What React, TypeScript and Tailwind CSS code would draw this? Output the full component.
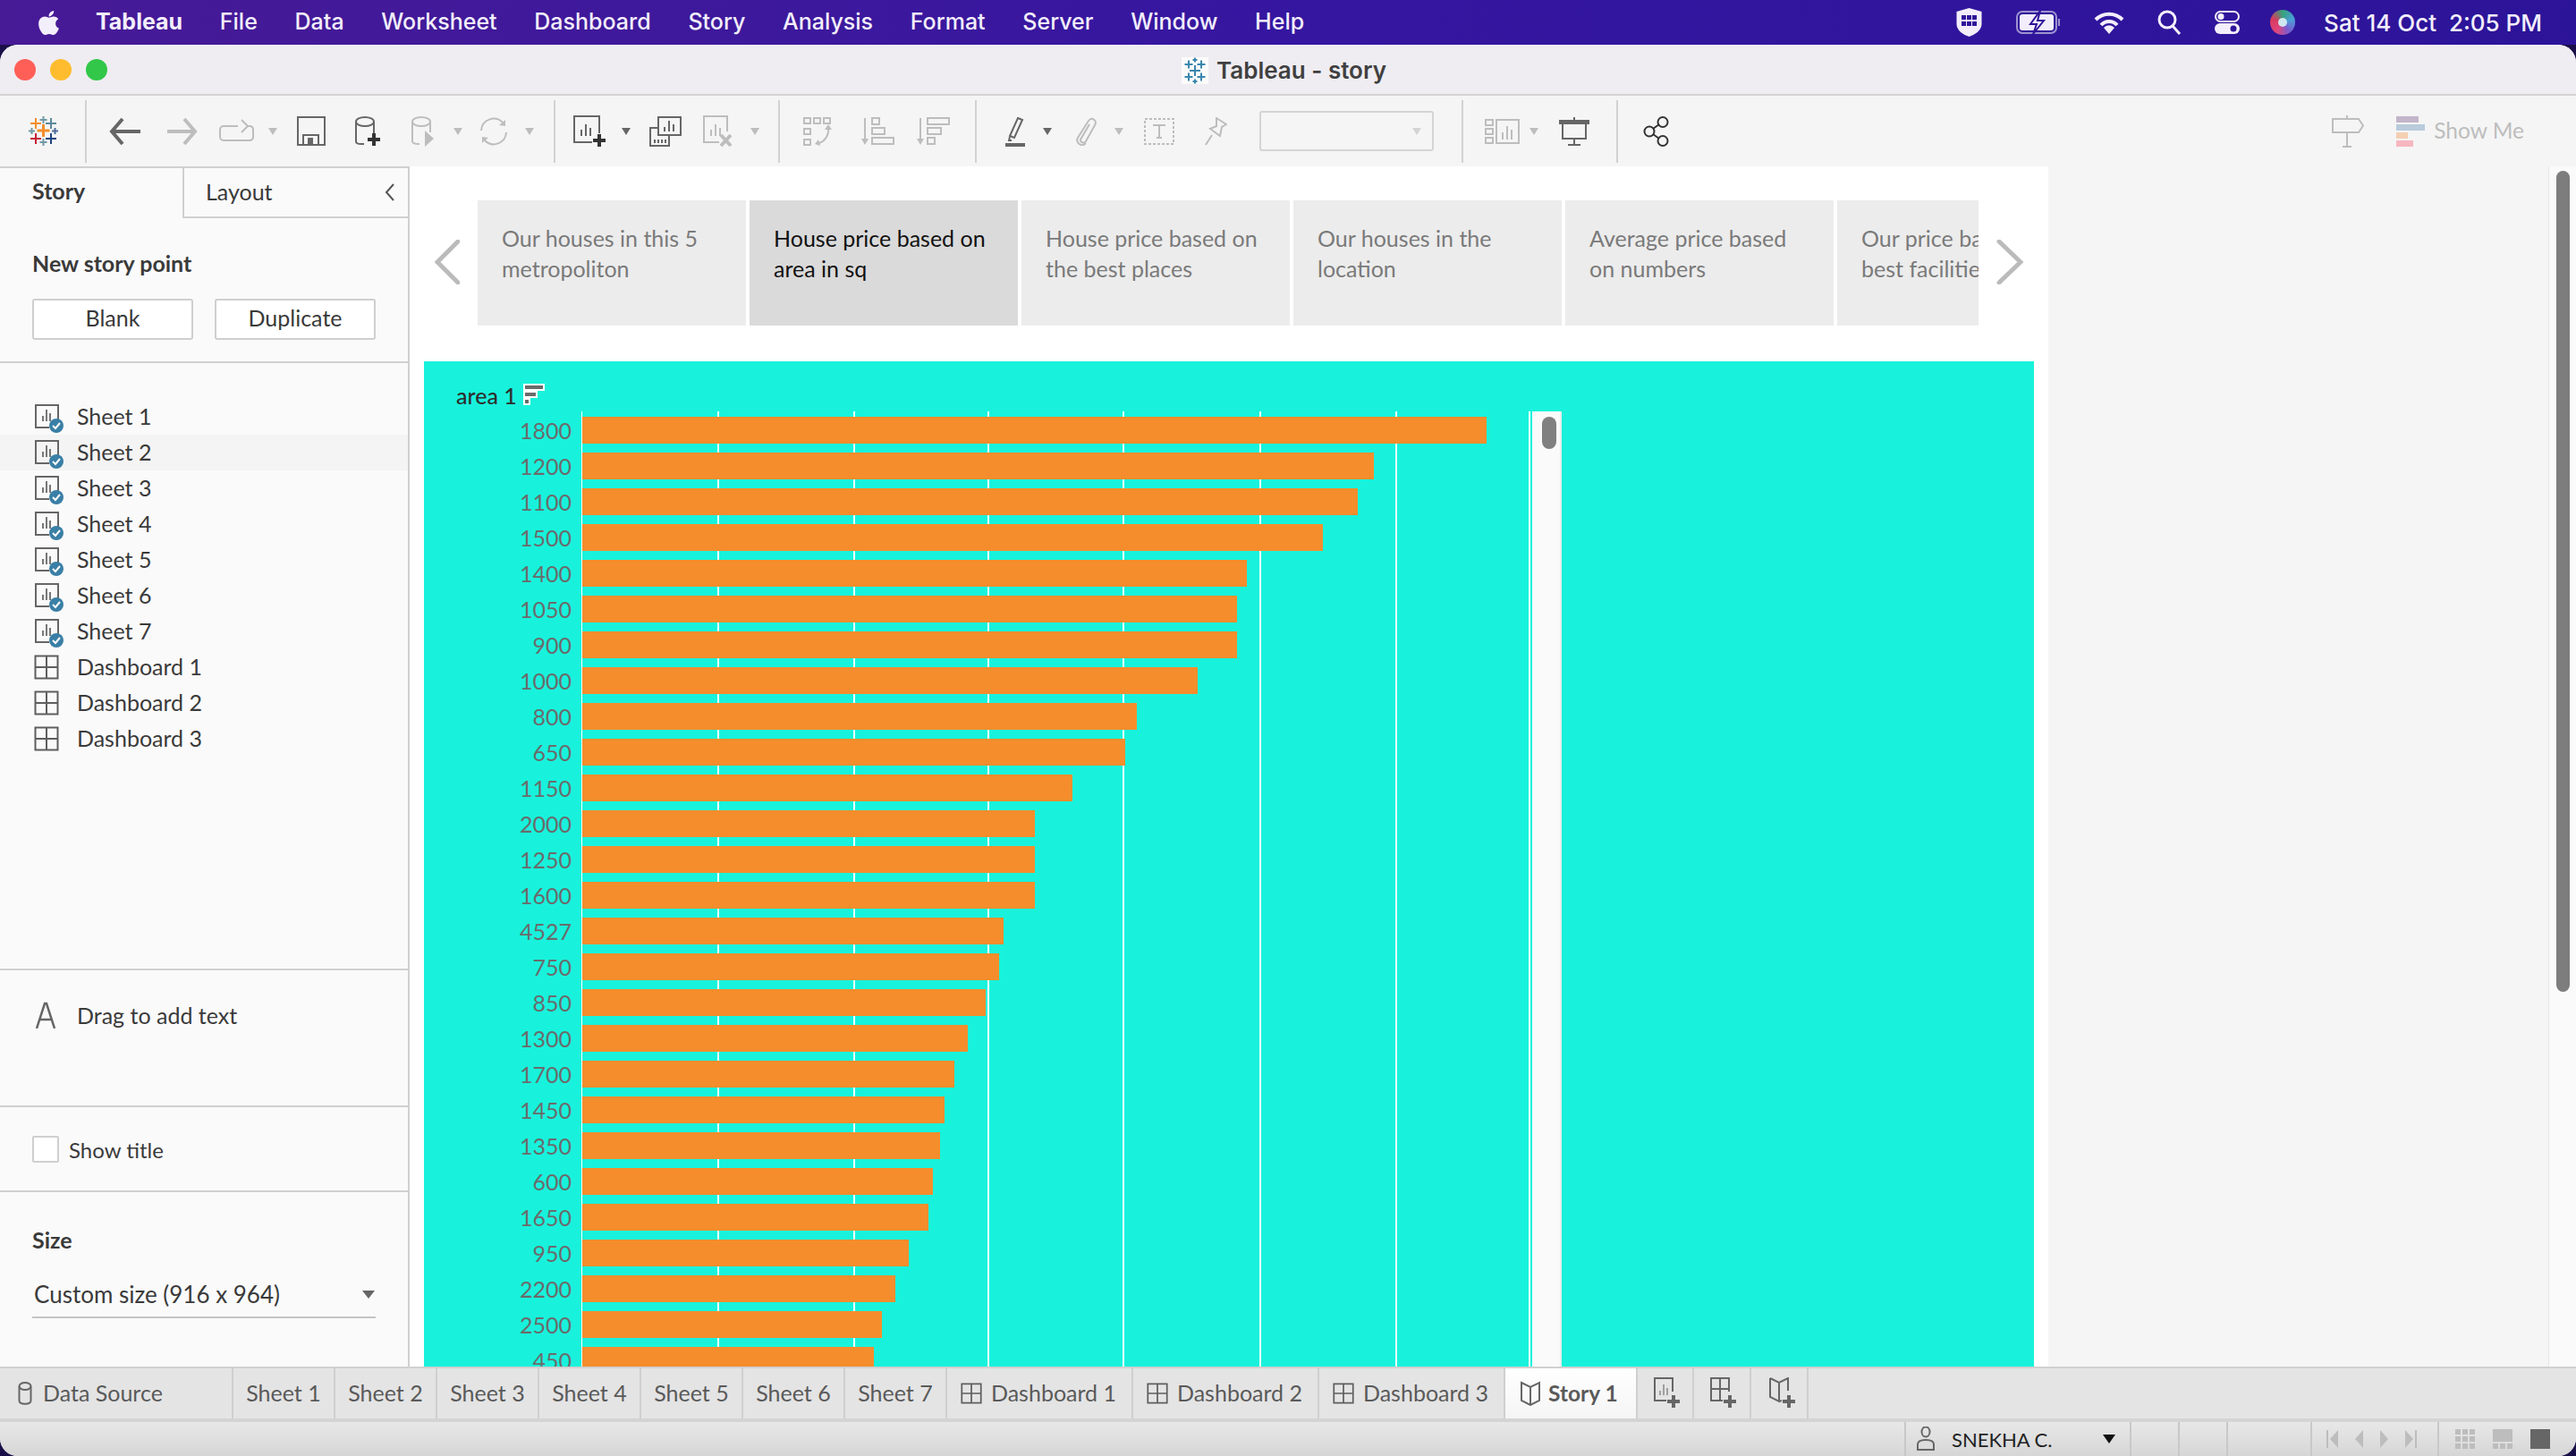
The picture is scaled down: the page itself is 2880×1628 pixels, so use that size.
import React from 'react';
import { FaApple } from 'react-icons/fa';

const DARK = '#666666';
const FADE = '#bdbdbd';

const bars: [string, number][] = [
  ['1800', 1662], ['1200', 1536], ['1100', 1518], ['1500', 1479], ['1400', 1394], ['1050', 1383], ['900', 1383],
  ['1000', 1339], ['800', 1271], ['650', 1258], ['1150', 1199], ['2000', 1157], ['1250', 1157], ['1600', 1157],
  ['4527', 1122], ['750', 1117], ['850', 1102], ['1300', 1082], ['1700', 1067], ['1450', 1056], ['1350', 1051],
  ['600', 1043], ['1650', 1038], ['950', 1016], ['2200', 1001], ['2500', 986], ['450', 977],
];

const gridLines = [152, 304, 454, 605, 758, 910];

const Cross = ({ x, y, s, c, t = 2 }: { x: number; y: number; s: number; c: string; t?: number }) => (
  <g fill={c}>
    <rect x={x - s / 2} y={y - t / 2} width={s} height={t} />
    <rect x={x - t / 2} y={y - s / 2} width={t} height={s} />
  </g>
);

const TableauLogo = () => (
  <svg width="33" height="33" viewBox="0 0 33 33" className="ml-[32px] shrink-0">
    <Cross x={16.5} y={16} s={14} c="#f28e2b" t={3} />
    <Cross x={16.5} y={4} s={8} c="#7099a6" />
    <Cross x={8} y={8} s={12} c="#f28e2b" t={2} />
    <Cross x={25} y={8} s={12} c="#5b879b" t={2} />
    <Cross x={8} y={25} s={12} c="#c72035" t={2} />
    <Cross x={25} y={25} s={12} c="#1f447e" t={2} />
    <Cross x={3.5} y={16.5} s={7} c="#7099a6" />
    <Cross x={29.5} y={16.5} s={7} c="#4e6c99" />
    <Cross x={16.5} y={29} s={8} c="#7099a6" />
  </svg>
);

const Sep = ({ className }: { className: string }) => <div className={`w-[2px] h-[70px] bg-[#d2d2d2] shrink-0 ${className}`} />;

const Drop = ({ className, color = FADE }: { className: string; color?: string }) => (
  <svg width="10" height="8" viewBox="0 0 10 8" className={`shrink-0 ${className}`}>
    <path d="M0 0h10L5 8z" fill={color} />
  </svg>
);

const BarsInDoc = ({ c }: { c: string }) => (
  <path d="M9 23v-7M14 23V10M19 23v-9" stroke={c} strokeWidth="2" fill="none" />
);

const PlusMark = ({ x, y, c = '#333', s = 14 }: { x: number; y: number; c?: string; s?: number }) => (
  <path d={`M${x - s / 2} ${y}h${s}M${x} ${y - s / 2}v${s}`} stroke={c} strokeWidth="4" fill="none" />
);

const SheetIcon = () => (
  <svg width="34" height="34" viewBox="0 0 34 34" className="shrink-0 ml-[38px] mt-[4px]">
    <path d="M27 24V2H2v25h15" fill="none" stroke="#666" strokeWidth="2" />
    <path d="M10 20v-6M14 20V7M18 20V11" stroke="#777" strokeWidth="2" fill="none" />
    <circle cx="25" cy="25" r="8" fill="#3a7fa6" />
    <path d="M21 25l3 3 5-6" stroke="#fff" strokeWidth="2" fill="none" />
  </svg>
);

const DashIcon = ({ className = '', size = 28 }: { className?: string; size?: number }) => (
  <svg width={size} height={size} viewBox="0 0 28 28" className={`shrink-0 ${className}`}>
    <path d="M1.5 1.5h25v25h-25zM14 1.5v25M1.5 14h25" fill="none" stroke="#5e5e5e" strokeWidth="2" />
  </svg>
);

const Toolbar = () => (
  <div className="h-[79px] bg-[#f5f5f5] flex items-center shrink-0 pr-[58px]">
    <TableauLogo />
    <Sep className="ml-[30px]" />
    <svg width="36" height="32" viewBox="0 0 36 32" className="ml-[24px] shrink-0">
      <path d="M16 2L4 16l12 14M4 16h32" fill="none" stroke={DARK} strokeWidth="4" />
    </svg>
    <svg width="35" height="32" viewBox="0 0 35 32" className="ml-[30px] shrink-0">
      <path d="M19 2l12 14-12 14M0 16h31" fill="none" stroke={FADE} strokeWidth="4" />
    </svg>
    <svg width="41" height="28" viewBox="0 0 41 28" className="ml-[22px] shrink-0">
      <path d="M22 8H6a4 4 0 0 0-4 4v8a4 4 0 0 0 4 4h30a4 4 0 0 0 3-4v-8a4 4 0 0 0-3-4h-4" fill="none" stroke={FADE} strokeWidth="2" />
      <path d="M26 1l7 7-7 7" fill="none" stroke={FADE} strokeWidth="2" />
    </svg>
    <Drop className="ml-[15px]" />
    <svg width="32" height="33" viewBox="0 0 32 33" className="ml-[22px] shrink-0">
      <rect x="1" y="1" width="30" height="31" fill="none" stroke={DARK} strokeWidth="2" />
      <path d="M7 32V21h17v11" fill="none" stroke={DARK} strokeWidth="2" />
      <rect x="12" y="24" width="6" height="8" fill={DARK} />
    </svg>
    <svg width="30" height="34" viewBox="0 0 30 34" className="ml-[33px] shrink-0">
      <ellipse cx="11" cy="6" rx="10" ry="5" fill="none" stroke={DARK} strokeWidth="2" />
      <path d="M1 6v22c0 3 3 3 9 3M21 6v16" fill="none" stroke={DARK} strokeWidth="2" />
      <PlusMark x={21} y={26} />
    </svg>
    <svg width="26" height="34" viewBox="0 0 26 34" className="ml-[33px] shrink-0">
      <ellipse cx="11" cy="6" rx="10" ry="5" fill="none" stroke={FADE} strokeWidth="2" />
      <path d="M1 6v22c0 2 3 3 8 3M21 6v12" fill="none" stroke={FADE} strokeWidth="2" />
      <path d="M15 16l10 9-10 9z" fill={FADE} />
    </svg>
    <Drop className="ml-[21px]" />
    <svg width="36" height="34" viewBox="0 0 36 34" className="ml-[17px] shrink-0">
      <path d="M4 16a14 14 0 0 1 24-9M32 18a14 14 0 0 1-24 9" fill="none" stroke={FADE} strokeWidth="2" />
      <path d="M24 10l7 1 0-7zM12 24l-7-1 0 7z" fill={FADE} />
    </svg>
    <Drop className="ml-[17px]" />
    <Sep className="ml-[22px]" />
    <svg width="38" height="36" viewBox="0 0 38 36" className="ml-[20px] shrink-0">
      <path d="M29 20V1H1v29h20" fill="none" stroke={DARK} strokeWidth="2" />
      <BarsInDoc c={DARK} />
      <PlusMark x={29} y={28} />
    </svg>
    <Drop className="ml-[16px]" color="#666" />
    <svg width="36" height="34" viewBox="0 0 36 34" className="ml-[21px] shrink-0">
      <rect x="10" y="1" width="25" height="20" fill="#f5f5f5" stroke={DARK} strokeWidth="2" />
      <path d="M17 17v-5M22 17V5M27 17V9" stroke={DARK} strokeWidth="2" />
      <path d="M9 13H1v20h21v-12" fill="none" stroke={DARK} strokeWidth="2" />
      <path d="M6 26v4M10 26v4M14 26v4M18 26v4" stroke={DARK} strokeWidth="2" />
    </svg>
    <svg width="34" height="36" viewBox="0 0 34 36" className="ml-[24px] shrink-0">
      <path d="M27 18V1H1v29h17" fill="none" stroke={FADE} strokeWidth="2" />
      <BarsInDoc c={FADE} />
      <path d="M20 22l11 12M31 22L20 34" stroke={FADE} strokeWidth="4" />
    </svg>
    <Drop className="ml-[19px]" />
    <Sep className="ml-[21px]" />
    <svg width="34" height="32" viewBox="0 0 34 32" className="ml-[26px] shrink-0">
      <g fill="none" stroke={FADE} strokeWidth="2">
        <path d="M1 1h7v6H1zM12 1h7v6h-7zM23 1h7v6h-7zM1 13h7v6H1zM1 25h7v6H1z" />
        <path d="M28 12c1 8-4 15-10 17" />
      </g>
      <path d="M24 14l4-6 4 6zM17 25l-4 5 6 2z" fill={FADE} />
    </svg>
    <svg width="37" height="32" viewBox="0 0 37 32" className="ml-[31px] shrink-0">
      <g fill="none" stroke={FADE} strokeWidth="2">
        <path d="M4 1v26" />
        <path d="M12 1h8v7h-8zM12 12h14v7H12zM12 23h24v7H12z" />
      </g>
      <path d="M0 24h8l-4 7z" fill={FADE} />
    </svg>
    <svg width="37" height="32" viewBox="0 0 37 32" className="ml-[25px] shrink-0">
      <g fill="none" stroke={FADE} strokeWidth="2">
        <path d="M4 1v26" />
        <path d="M12 1h24v7H12zM12 12h15v7H12zM12 23h8v7h-8z" />
      </g>
      <path d="M0 24h8l-4 7z" fill={FADE} />
    </svg>
    <Sep className="ml-[28px]" />
    <svg width="22" height="34" viewBox="0 0 22 34" className="ml-[32px] shrink-0">
      <path d="M14 2l5 2-9 20-5-2z" fill="none" stroke={DARK} strokeWidth="2" />
      <path d="M5 23l-1 4 3 0" fill="none" stroke={DARK} strokeWidth="2" />
      <rect x="0" y="30" width="22" height="4" fill={DARK} />
    </svg>
    <Drop className="ml-[20px]" color="#666" />
    <svg width="27" height="32" viewBox="0 0 27 32" className="ml-[25px] shrink-0">
      <path d="M17 8L7 25c-1 3 4 5 6 2L23 9c3-5-3-10-7-5L4 23c-3 6 5 11 9 6" fill="none" stroke={FADE} strokeWidth="2" />
    </svg>
    <Drop className="ml-[18px]" />
    <svg width="34" height="30" viewBox="0 0 34 30" className="ml-[23px] shrink-0">
      <rect x="1" y="1" width="32" height="28" fill="none" stroke={FADE} strokeWidth="2" strokeDasharray="3 2" />
      <path d="M10 8h14M17 8v14M14 22h6" fill="none" stroke={FADE} strokeWidth="2" />
    </svg>
    <svg width="26" height="32" viewBox="0 0 26 32" className="ml-[33px] shrink-0">
      <path d="M14 1l11 7-5 3-2 10-11-8 7-3zM9 20l-7 11" fill="none" stroke={FADE} strokeWidth="2" />
    </svg>
    <div className="ml-[36px] w-[195px] h-[45px] border-2 border-[#d4d4d4] rounded-[3px] bg-[#f5f5f5] flex items-center justify-end pr-[12px] shrink-0">
      <Drop className="" color="#d4d4d4" />
    </div>
    <Sep className="ml-[31px]" />
    <svg width="40" height="28" viewBox="0 0 40 28" className="ml-[24px] shrink-0">
      <g fill="none" stroke={FADE} strokeWidth="2">
        <path d="M1 1h8v6H1zM1 11h8v6H1zM1 21h8v6H1zM13 1h25v26H13z" />
        <path d="M20 23v-8M25 23V8M30 23V12" />
      </g>
    </svg>
    <Drop className="ml-[10px]" />
    <svg width="34" height="32" viewBox="0 0 34 32" className="ml-[23px] shrink-0">
      <rect x="0" y="3" width="34" height="5" fill={DARK} />
      <path d="M4 8v16h26V8M17 0v3M17 24v7M10 31h14" fill="none" stroke={DARK} strokeWidth="2" />
    </svg>
    <Sep className="ml-[30px]" />
    <svg width="30" height="34" viewBox="0 0 30 34" className="ml-[28px] shrink-0">
      <g fill="none" stroke="#333" strokeWidth="2">
        <circle cx="7" cy="17" r="5.5" />
        <circle cx="22" cy="6.5" r="5.5" />
        <circle cx="22" cy="27.5" r="5.5" />
        <path d="M11 14l7-5M11 20l7 5" />
      </g>
    </svg>
    <svg width="36" height="36" viewBox="0 0 36 36" className="ml-auto shrink-0">
      <path d="M17 0v35M12 35h10" stroke={FADE} strokeWidth="2" fill="none" />
      <path d="M1 4h29l5 7.500-5 7.500H1z" fill="#f5f5f5" stroke={FADE} strokeWidth="2" />
    </svg>
    <div className="ml-[36px] w-[32px] h-[34px] flex flex-col gap-[2px] shrink-0">
      <div className="w-[25px] h-[7px] bg-[#c2b5c9]" />
      <div className="w-[32px] h-[7px] bg-[#b9cbdc]" />
      <div className="w-[13px] h-[7px] bg-[#f4cfb3]" />
      <div className="w-[19px] h-[7px] bg-[#f6b7bf]" />
    </div>
    <span className="ml-[10px] text-[24.5px] text-[#bdbdbd]">Show Me</span>
  </div>
);

const MenuBar = () => (
  <div className="h-[50px] shrink-0 flex items-center text-[#f3eefb] bg-linear-to-r from-[#471a96] via-[#3516a0] to-[#2c1499] font-[family-name:Inter,sans-serif] text-[25px] font-medium">
    <FaApple className="ml-[39px] text-[31px] shrink-0" />
    <div className="ml-[37px] flex items-center gap-[41.700px]">
      <span className="font-bold">Tableau</span>
      <span>File</span>
      <span>Data</span>
      <span>Worksheet</span>
      <span>Dashboard</span>
      <span>Story</span>
      <span>Analysis</span>
      <span>Format</span>
      <span>Server</span>
      <span>Window</span>
      <span>Help</span>
    </div>
    <div className="ml-auto flex items-center pr-[38px]">
      <svg width="29" height="34" viewBox="0 0 29 34" className="shrink-0">
        <path d="M14.5 1l14 4v14c0 7-8 12-14 14C8 31 .5 26 .5 19V5z" fill="#f3eefb" />
        <path d="M6 9h5v5H6zM12 9h5v5h-5zM18 9h5v5h-5zM6 16h5v5H6zM12 16h5v5h-5zM18 16h5v5h-5z" fill="#2f1499" />
      </svg>
      <svg width="50" height="26" viewBox="0 0 50 26" className="ml-[38px] shrink-0">
        <rect x="1" y="1" width="44" height="24" rx="6" fill="none" stroke="#9d92cf" strokeWidth="2" />
        <rect x="4" y="4" width="38" height="18" rx="3" fill="#f3eefb" />
        <rect x="47" y="9" width="2" height="8" fill="#9d92cf" />
        <path d="M27 0l-11 15h7l-4 11 12-15h-7z" fill="#f3eefb" stroke="#2f1499" strokeWidth="2" />
      </svg>
      <svg width="34" height="26" viewBox="0 0 34 26" className="ml-[37px] shrink-0">
        <path d="M2 10a21 21 0 0 1 30 0M8 16a12 12 0 0 1 18 0" fill="none" stroke="#f3eefb" strokeWidth="4" />
        <path d="M11 19a8 8 0 0 1 12 0l-6 7z" fill="#f3eefb" />
      </svg>
      <svg width="27" height="28" viewBox="0 0 27 28" className="ml-[37px] shrink-0">
        <circle cx="11" cy="11" r="9" fill="none" stroke="#f3eefb" strokeWidth="3" />
        <path d="M17 18l8 9" stroke="#f3eefb" strokeWidth="3" />
      </svg>
      <svg width="28" height="26" viewBox="0 0 28 26" className="ml-[37px] shrink-0">
        <rect x="1" y="1" width="26" height="11" rx="5.5" fill="none" stroke="#f3eefb" strokeWidth="2" />
        <circle cx="7" cy="6.5" r="3.5" fill="#f3eefb" />
        <rect x="0" y="14" width="28" height="12" rx="6" fill="#f3eefb" />
        <circle cx="21" cy="20" r="3.5" fill="#2f1499" />
      </svg>
      <div className="ml-[34px] w-[28px] h-[28px] rounded-full shrink-0 bg-[conic-gradient(#35a37a,#4aa0d8,#7a5bd0,#e0457b,#d83a5f,#35a37a)] flex items-center justify-center">
        <div className="w-[10px] h-[10px] rounded-full bg-[#cfe8f0]" />
      </div>
      <span className="ml-[32px] whitespace-pre text-[26px]">Sat 14 Oct  2:05 PM</span>
    </div>
  </div>
);

const Sidebar = () => (
  <div className="w-[458px] shrink-0 bg-[#fafafa] border-r-2 border-t-2 border-[#d0d0d0] flex flex-col text-[#3a3a3a] text-[25px]">
    <div className="h-[218px] border-b-2 border-[#d0d0d0] shrink-0">
      <div className="flex h-[56px]">
        <div className="w-[204px] pl-[36px] pt-[7px] font-bold">Story</div>
        <div className="flex-1 flex items-center border-l-2 border-b-2 border-[#d0d0d0] pl-[24px] pr-[14px] justify-between">
          <span>Layout</span>
          <svg width="12" height="20" viewBox="0 0 12 20"><path d="M10 1L2 10l8 9" fill="none" stroke="#555" strokeWidth="2" /></svg>
        </div>
      </div>
      <div className="pl-[36px] pt-[33px] font-bold leading-[34px]">New story point</div>
      <div className="flex gap-[24px] pl-[36px] mt-[23px]">
        <button className="w-[180px] h-[46px] border-2 border-[#cfcfcf] rounded-[3px] bg-white pb-[2px]">Blank</button>
        <button className="w-[180px] h-[46px] border-2 border-[#cfcfcf] rounded-[3px] bg-white pb-[2px]">Duplicate</button>
      </div>
    </div>
    <div className="h-[679px] shrink-0 border-b-2 border-[#d0d0d0] pt-[40px]">
      {['Sheet 1', 'Sheet 2', 'Sheet 3', 'Sheet 4', 'Sheet 5', 'Sheet 6', 'Sheet 7'].map((s, i) => (
        <div key={s} className={i === 1 ? 'h-[40px] flex items-center bg-[#f4f4f4]' : 'h-[40px] flex items-center'}>
          <SheetIcon />
          <span className="ml-[14px] mb-[1px]">{s}</span>
        </div>
      ))}
      {['Dashboard 1', 'Dashboard 2', 'Dashboard 3'].map((s) => (
        <div key={s} className="h-[40px] flex items-center">
          <DashIcon className="ml-[38px]" />
          <span className="ml-[20px] mb-[1px]">{s}</span>
        </div>
      ))}
    </div>
    <div className="h-[153px] shrink-0 border-b-2 border-[#d0d0d0] pt-[32px] flex items-start">
      <svg width="24" height="30" viewBox="0 0 24 30" className="ml-[39px] mt-[3px] shrink-0">
        <path d="M2 30L11 2h2l9 28M6 20h12" fill="none" stroke="#666" strokeWidth="2.5" />
      </svg>
      <span className="ml-[23px]">Drag to add text</span>
    </div>
    <div className="h-[95px] shrink-0 border-b-2 border-[#d0d0d0] flex items-center pl-[36px]">
      <div className="w-[30px] h-[30px] border-2 border-[#cfcfcf] rounded-[2px] bg-white" />
      <span className="ml-[11px] text-[24px] mt-[2px]">Show title</span>
    </div>
    <div className="flex-1 px-[36px] pt-[36px]">
      <div className="font-bold leading-[34px]">Size</div>
      <div className="mt-[25px] h-[46px] border-b-2 border-[#c4c4c4] flex items-center justify-between pl-[2px] pr-[1px] pb-[6px] text-[26px]">
        <span>Custom size (916 x 964)</span>
        <svg width="14" height="9" viewBox="0 0 14 9" className="shrink-0"><path d="M0 0h14L7 9z" fill="#666" /></svg>
      </div>
    </div>
  </div>
);

const stories = [
  ['Our houses in this 5', 'metropoliton'],
  ['House price based on', 'area in sq'],
  ['House price based on', 'the best places'],
  ['Our houses in the', 'location'],
  ['Average price based', 'on numbers'],
  ['Our price based on', 'best facilities'],
];

const StoryNav = () => (
  <div className="flex h-[140px] mt-[38px] shrink-0 items-center text-[25px] leading-[34px]">
    <svg width="28" height="50" viewBox="0 0 28 50" className="ml-[28px] mb-[2px] shrink-0">
      <path d="M26 2L3 25l23 23" fill="none" stroke="#bbbbbb" strokeWidth="5" strokeLinecap="round" />
    </svg>
    <div className="ml-[20px] w-[1678px] h-full flex gap-[4px] overflow-hidden shrink-0">
      {stories.map((s, i) => (
        <div key={i} className={i === 1 ? 'w-[300px] shrink-0 bg-[#dadada] text-[#111] pl-[27px] pt-[25px] whitespace-nowrap' : 'w-[300px] shrink-0 bg-[#ececec] text-[#7a7a7a] pl-[27px] pt-[25px] whitespace-nowrap'}>
          <div>{s[0]}</div>
          <div>{s[1]}</div>
        </div>
      ))}
    </div>
    <svg width="30" height="50" viewBox="0 0 30 50" className="ml-[20px] mb-[2px] shrink-0">
      <path d="M3 2l24 23L3 48" fill="none" stroke="#bbbbbb" strokeWidth="5" strokeLinecap="round" />
    </svg>
  </div>
);

const Chart = () => (
  <div className="ml-[16px] mt-[40px] w-[1800px] flex-1 min-h-0 overflow-hidden bg-[#18f2dc] flex flex-col">
    <div className="h-[56px] shrink-0 flex items-end pl-[36px] pb-[2px]">
      <span className="text-[25px] text-[#2e2e2e] leading-[32px] font-medium">area 1</span>
      <svg width="26" height="26" viewBox="0 0 26 26" className="ml-[6px] mb-[4px]">
        <path d="M1 1h24v8h-8v8H9v8H1z" fill="#fff" />
        <path d="M3 3h20v4H3zM3 11h12v4H3zM3 19h4v4H3z" fill="#6b6b6b" />
      </svg>
    </div>
    <div className="flex flex-1 min-h-0">
      <div className="w-[176px] shrink-0 pt-[6px] flex flex-col gap-[10px] text-[25px] text-[#6b6b6b] text-right pr-[11px]">
        {bars.map(([label]) => (
          <div key={label} className="h-[30px] leading-[30px] shrink-0">{label}</div>
        ))}
      </div>
      <div className="relative w-[1059px] shrink-0 border-l border-white pt-[6px] flex flex-col gap-[10px]">
        {gridLines.map((x) => (
          <div key={x} className="absolute top-0 bottom-0 w-[2px] bg-[#f4fffd]" style={{ left: x - 1 }} />
        ))}
        {bars.map(([label, end]) => (
          <div key={label} className="relative h-[30px] shrink-0 bg-[#f58d2c]" style={{ width: end - 651 }} />
        ))}
      </div>
      <div className="w-[37px] shrink-0 flex">
        <div className="w-[2px] bg-white" />
        <div className="w-[2px]" />
        <div className="flex-1 bg-[#fafafa] border-r-2 border-[#ececec] pl-[11px] pt-[6px]">
          <div className="w-[16px] h-[36px] rounded-full bg-[#808080]" />
        </div>
      </div>
    </div>
  </div>
);

const Content = () => (
  <div className="flex-1 flex min-w-0 min-h-0 bg-[#f5f5f5]">
    <div className="w-[1832px] shrink-0 bg-white flex flex-col min-h-0">
      <StoryNav />
      <Chart />
    </div>
    <div className="flex-1" />
    <div className="w-[31px] shrink-0 bg-[#fafafa] border-l border-[#e6e6e6] pl-[8px] pt-[5px]">
      <div className="w-[15px] h-[918px] rounded-full bg-[#7d7d7d]" />
    </div>
  </div>
);

const tabBase = 'h-full flex items-center shrink-0 border-r-2 border-[#cfcfcf]';

const Tabs = () => (
  <div className="h-[62px] shrink-0 bg-[#e4e4e4] border-t-2 border-b-[4px] border-t-[#d0d0d0] border-b-[#d4d4d4] flex text-[25px] text-[#5a5a5a]">
    <div className={`${tabBase} w-[261px] pl-[20px]`}>
      <svg width="16" height="26" viewBox="0 0 16 26" className="shrink-0">
        <ellipse cx="8" cy="5" rx="6.5" ry="4" fill="none" stroke="#666" strokeWidth="2" />
        <path d="M1.5 5v16c0 5 13 5 13 0V5" fill="none" stroke="#666" strokeWidth="2" />
      </svg>
      <span className="ml-[12px]">Data Source</span>
    </div>
    {['Sheet 1', 'Sheet 2', 'Sheet 3', 'Sheet 4', 'Sheet 5', 'Sheet 6', 'Sheet 7'].map((s) => (
      <div key={s} className={`${tabBase} w-[114px] justify-center`}>{s}</div>
    ))}
    {['Dashboard 1', 'Dashboard 2', 'Dashboard 3'].map((s) => (
      <div key={s} className={`${tabBase} w-[208px] pl-[15px]`}>
        <DashIcon size={24} />
        <span className="ml-[10px]">{s}</span>
      </div>
    ))}
    <div className="h-full w-[148px] shrink-0 flex items-center pl-[16px] bg-linear-to-b from-white to-[#f5f5f5] border-r-2 border-[#cfcfcf] font-bold">
      <svg width="24" height="28" viewBox="0 0 24 28" className="shrink-0">
        <path d="M2 2l10 5 10-5v20l-10 5-10-5zM12 7v20" fill="none" stroke="#666" strokeWidth="2" />
      </svg>
      <span className="ml-[8px] text-[24.5px]">Story 1</span>
    </div>
    <div className={`${tabBase} w-[63px] pl-[18px]`}>
      <svg width="30" height="36" viewBox="0 0 30 36" className="shrink-0">
        <path d="M21 16V1H1v25h13" fill="none" stroke="#666" strokeWidth="2" />
        <path d="M7 20v-5M11 20V8M15 20v-8" stroke="#888" strokeWidth="1.5" />
        <PlusMark x={22} y={27} c="#666" />
      </svg>
    </div>
    <div className={`${tabBase} w-[64px] pl-[18px]`}>
      <svg width="30" height="36" viewBox="0 0 30 36" className="shrink-0">
        <path d="M21 16V1H1v25h13M11 1v25M1 13h20" fill="none" stroke="#666" strokeWidth="2" />
        <PlusMark x={22} y={27} c="#666" />
      </svg>
    </div>
    <div className={`${tabBase} w-[64px] pl-[20px]`}>
      <svg width="30" height="36" viewBox="0 0 30 36" className="shrink-0">
        <path d="M1 1l10 5 10-5v14M1 1v21l10 5v-21M11 27l3-1" fill="none" stroke="#666" strokeWidth="2" />
        <PlusMark x={22} y={27} c="#666" />
      </svg>
    </div>
  </div>
);

const StatusBar = () => (
  <div className="h-[38px] shrink-0 bg-linear-to-b from-[#e8e8e8] to-[#d6d6d6] flex items-stretch">
    <div className="ml-[2129px] w-[254px] shrink-0 border-l-2 border-r-2 border-[#c8c8c8] flex items-center pl-[11px]">
      <svg width="22" height="28" viewBox="0 0 22 28" className="shrink-0">
        <ellipse cx="11" cy="6" rx="4.5" ry="5.5" fill="none" stroke="#666" strokeWidth="2" />
        <path d="M2 26V20c0-3 3-5 9-5s9 2 9 5v6z" fill="none" stroke="#666" strokeWidth="2" />
      </svg>
      <span className="ml-[18px] text-[22px] text-[#222]">SNEKHA C.</span>
      <svg width="14" height="10" viewBox="0 0 14 10" className="ml-auto mr-[16px]"><path d="M0 0h14L7 10z" fill="#111" /></svg>
    </div>
    <div className="w-[54px] shrink-0 border-r-2 border-[#c8c8c8]" />
    <div className="w-[54px] shrink-0 border-r-2 border-[#c8c8c8]" />
    <div className="w-[94px] shrink-0 border-r-2 border-[#c8c8c8]" />
    <div className="w-[142px] shrink-0 border-r-2 border-[#c8c8c8] flex items-center gap-[19px] pl-[16px]">
      <svg width="13" height="22" viewBox="0 0 13 22"><path d="M1 1v20" stroke="#bdbdbd" strokeWidth="2" /><path d="M13 1v20L4 11z" fill="#bdbdbd" /></svg>
      <svg width="9" height="22" viewBox="0 0 9 22"><path d="M9 1v20L0 11z" fill="#bdbdbd" /></svg>
      <svg width="9" height="22" viewBox="0 0 9 22"><path d="M0 1v20l9-10z" fill="#bdbdbd" /></svg>
      <svg width="13" height="22" viewBox="0 0 13 22"><path d="M12 1v20" stroke="#bdbdbd" strokeWidth="2" /><path d="M0 1v20l9-10z" fill="#bdbdbd" /></svg>
    </div>
    <div className="flex items-center pl-[18px] gap-[20px]">
      <svg width="22" height="22" viewBox="0 0 22 22">
        <path d="M0 0h6v6H0zM8 0h6v6H8zM16 0h6v6h-6zM0 8h6v6H0zM8 8h6v6H8zM16 8h6v6h-6zM0 16h6v6H0zM8 16h6v6H8zM16 16h6v6h-6z" fill="#bdbdbd" />
      </svg>
      <svg width="22" height="22" viewBox="0 0 22 22">
        <path d="M0 0h22v14H0zM0 16h6v6H0zM8 16h6v6H8zM16 16h6v6h-6z" fill="#bdbdbd" />
      </svg>
      <div className="w-[22px] h-[22px] bg-[#666]" />
    </div>
  </div>
);

export default function App() {
  return (
    <div className="w-[2880px] h-[1628px] flex flex-col overflow-hidden bg-[#1b0f4a] font-[family-name:Lato,sans-serif]">
      <MenuBar />
      <div className="flex-1 min-h-0 flex flex-col rounded-[20px] overflow-hidden bg-[#f5f5f5]">
        <div className="h-[57px] shrink-0 bg-[#efedf2] border-b-2 border-[#d4d4d4] flex items-center relative">
          <div className="flex items-center gap-[16px] ml-[16px]">
            <div className="w-[24px] h-[24px] rounded-full bg-[#ff5f57]" />
            <div className="w-[24px] h-[24px] rounded-full bg-[#febc2e]" />
            <div className="w-[24px] h-[24px] rounded-full bg-[#32c748]" />
          </div>
          <div className="absolute left-[1321px] top-[9px] flex items-center gap-[9px] font-[family-name:Inter,sans-serif] text-[26px] font-semibold text-[#404040]">
            <svg width="30" height="30" viewBox="0 0 30 30" className="shrink-0">
              <rect width="30" height="30" fill="#fbfbfb" />
              <Cross x={15} y={15} s={12} c="#3a86ad" />
              <Cross x={8} y={8} s={9} c="#3a86ad" />
              <Cross x={22} y={8} s={9} c="#3a86ad" />
              <Cross x={8} y={22} s={9} c="#3a86ad" />
              <Cross x={22} y={22} s={9} c="#3a86ad" />
              <Cross x={15} y={3} s={5} c="#3a86ad" />
              <Cross x={15} y={27} s={5} c="#3a86ad" />
            </svg>
            <span>Tableau - story</span>
          </div>
        </div>
        <Toolbar />
        <div className="flex-1 min-h-0 flex">
          <Sidebar />
          <Content />
        </div>
        <Tabs />
        <StatusBar />
      </div>
    </div>
  );
}
